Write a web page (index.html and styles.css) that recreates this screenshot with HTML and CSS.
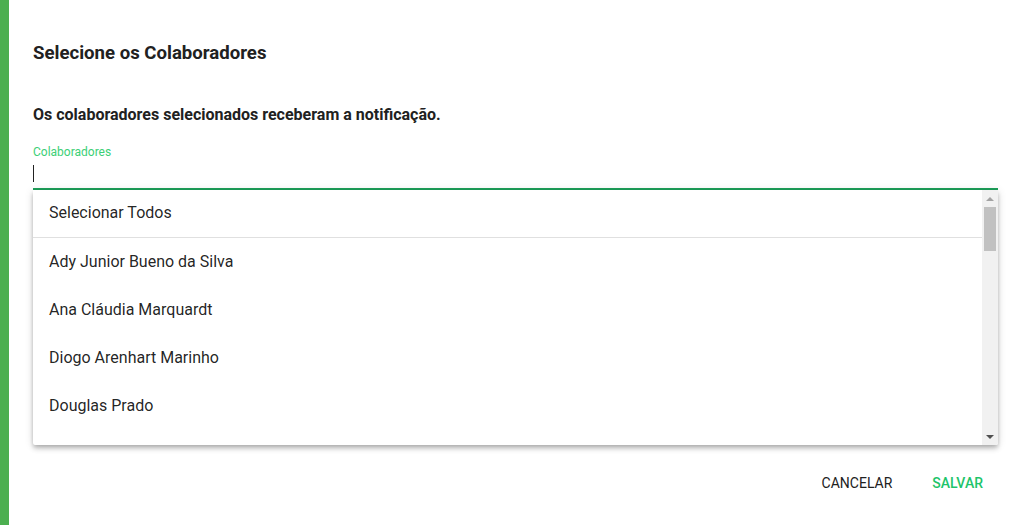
FILE: index.html
```html
<html>

<head>
	<title>Selecione os Colaboradores</title>
	<link rel="stylesheet" href="styles.css">
</head>

<body>
	<div class="dialog">
		<h2 class="title">Selecione os Colaboradores</h2>
		<h3 class="subtitle">Os colaboradores selecionados receberam a notificação.</h3>

		<div class="field">
			<label>Colaboradores</label>
			<div class="input"><span class="caret"></span></div>
		</div>

		<div class="menu">
			<ul class="options">
				<li class="all">Selecionar Todos</li>
				<li>Ady Junior Bueno da Silva</li>
				<li>Ana Cláudia Marquardt</li>
				<li>Diogo Arenhart Marinho</li>
				<li>Douglas Prado</li>
			</ul>
			<div class="scrollbar">
				<span class="arrow up"></span>
				<span class="thumb"></span>
				<span class="track"></span>
				<span class="arrow down"></span>
			</div>
		</div>

		<div class="actions">
			<button class="btn">Cancelar</button>
			<button class="btn primary">Salvar</button>
		</div>
	</div>
</body>

</html>
```

FILE: styles.css
```css
* {
	box-sizing: border-box;
}

body {
	margin: 0;
	font-family: Roboto, "Liberation Sans", sans-serif;
	background: #fff;
	color: rgba(0, 0, 0, 0.87);
	border-left: 9px solid #4caf50;
	height: 525px;
	overflow: hidden;
}

.dialog {
	padding: 41px 25px 0 24px;
}

.title {
	font-size: 18.6px;
	font-weight: 700;
	line-height: 24px;
	margin: 0;
	color: #212121;
}

.subtitle {
	font-size: 16px;
	font-weight: 700;
	line-height: 20px;
	margin: 40px 0 0;
	color: #212121;
}

.field {
	margin-top: 20px;
}

.field label {
	display: block;
	font-size: 12px;
	line-height: 14px;
	color: #3ccf76;
}

.input {
	height: 31px;
	border-bottom: 2px solid #1ea05a;
	padding-top: 6px;
}

.caret {
	display: block;
	width: 1px;
	height: 17px;
	background: #222;
}

.menu {
	display: flex;
	height: 255px;
	background: #fff;
	box-shadow: 0 2px 4px -1px rgba(0, 0, 0, 0.2), 0 4px 5px 0 rgba(0, 0, 0, 0.14), 0 1px 10px 0 rgba(0, 0, 0, 0.12);
	border-radius: 0 0 2px 2px;
	overflow: hidden;
}

.options {
	flex: 1;
	list-style: none;
	margin: 0;
	padding: 0;
}

.options li {
	height: 48px;
	line-height: 48px;
	padding-left: 16px;
	font-size: 16px;
	color: rgba(0, 0, 0, 0.87);
}

.options li.all {
	border-bottom: 1px solid #e0e0e0;
	line-height: 46px;
}

.scrollbar {
	width: 16px;
	background: #f1f1f1;
	display: flex;
	flex-direction: column;
	align-items: center;
}

.arrow {
	height: 17px;
	width: 16px;
	display: flex;
	align-items: center;
	justify-content: center;
}

.arrow::before {
	content: "";
	border-left: 4px solid transparent;
	border-right: 4px solid transparent;
}

.arrow.up::before {
	border-bottom: 4px solid #a3a3a3;
}

.arrow.down::before {
	border-top: 4px solid #505050;
}

.thumb {
	width: 12px;
	height: 44px;
	background: #c1c1c1;
}

.track {
	flex: 1;
}

.actions {
	display: flex;
	justify-content: flex-end;
	gap: 8px;
	margin: 20px -1px 0 0;
}

.btn {
	height: 36px;
	padding: 0 16px;
	border: none;
	background: none;
	font-family: inherit;
	font-size: 14px;
	font-weight: 400;
	text-transform: uppercase;
	color: #212121;
}

.btn.primary {
	color: #1ec46a;
	font-weight: 500;
}
```
